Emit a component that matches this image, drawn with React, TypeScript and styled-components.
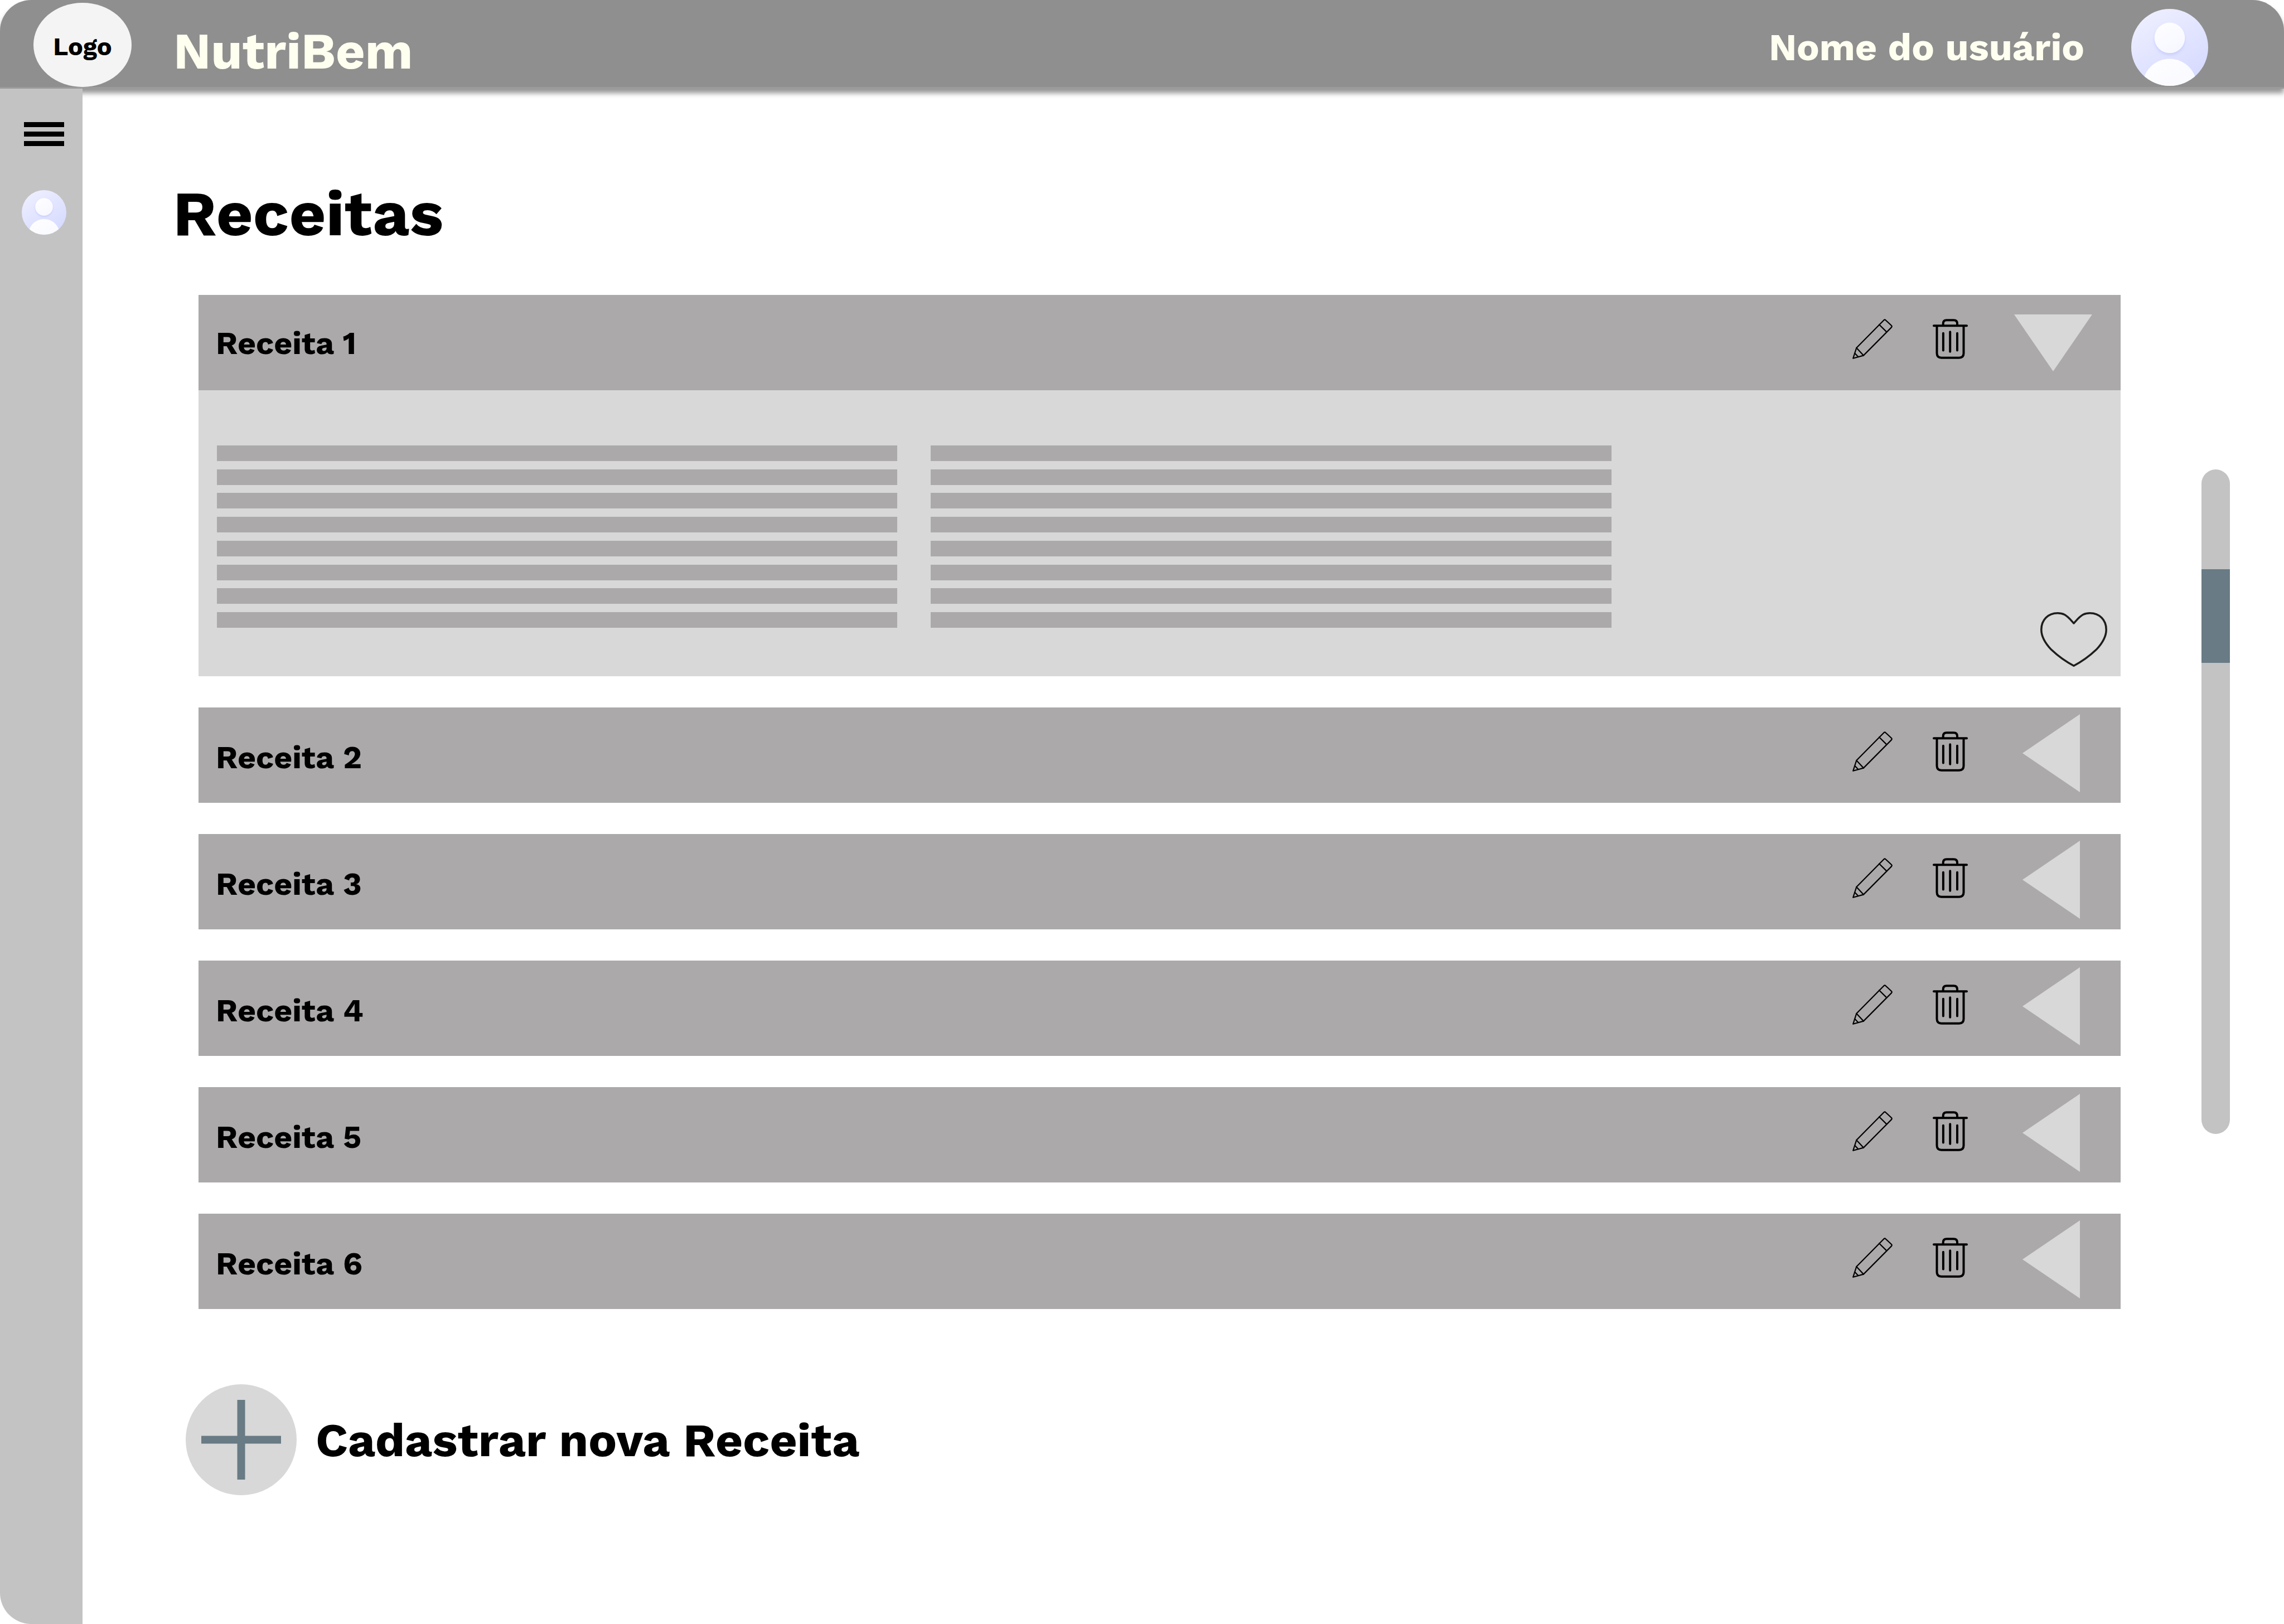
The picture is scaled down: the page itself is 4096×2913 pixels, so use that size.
import React, { useId, useState } from "react";
import styled, { createGlobalStyle } from "styled-components";

const GlobalStyle = createGlobalStyle`
  *, *::before, *::after { box-sizing: border-box; }
  body {
    margin: 0;
    background: #ffffff;
    color: #000000;
    font-family: "Work Sans", Inter, "Liberation Sans", sans-serif;
    font-weight: 700;
  }
  button {
    margin: 0;
    padding: 0;
    border: 0;
    background: none;
    color: inherit;
    font: inherit;
    cursor: pointer;
  }
  svg { display: block; }
`;

const Page = styled.div`
  display: flex;
  flex-direction: column;
  min-height: 100vh;
`;

const Header = styled.header`
  position: relative;
  display: flex;
  align-items: center;
  height: 159px;
  padding: 0 136px 0 60px;
  border-bottom: 3px solid #9b9b9b;
  border-radius: 56px 56px 0 0;
  background: #8f8f8f;
  color: #fffff0;
  box-shadow: 0 8px 10px rgba(0, 0, 0, 0.42);
`;

const Logo = styled.a`
  display: flex;
  align-items: center;
  justify-content: center;
  align-self: flex-end;
  width: 176px;
  height: 151px;
  padding-top: 6px;
  border-radius: 50%;
  background: #f4f4f4;
  color: #000000;
  font-size: 45px;
  line-height: 56px;
  text-decoration: none;
`;

const Brand = styled.span`
  margin-left: 75px;
  padding-top: 28px;
  font-size: 91px;
  line-height: 104px;
`;

const User = styled.div`
  display: flex;
  align-items: center;
  gap: 84px;
  margin-left: auto;
  padding-top: 14px;
  font-size: 68px;
  line-height: 80px;
`;

const Body = styled.div`
  display: flex;
  flex: 1;
`;

const Sidebar = styled.nav`
  position: relative;
  display: flex;
  flex-direction: column;
  align-items: center;
  gap: 79px;
  width: 148px;
  padding: 60px 0 0 9px;
  border-bottom-left-radius: 56px;
  background: #c3c3c3;
`;

const MenuButton = styled.button`
  display: flex;
  flex-direction: column;
  gap: 8px;
  width: 72px;
`;

const MenuBar = styled.span`
  height: 9px;
  background: #000000;
`;

const Main = styled.main`
  flex: 1;
  padding: 159px 145px 0 162px;
`;

const Title = styled.h1`
  margin: 0;
  font-size: 114px;
  line-height: 130px;
`;

const RecipeList = styled.ul`
  display: flex;
  flex-direction: column;
  gap: 56px;
  margin: 81px 0 0 46px;
  padding: 0;
  list-style: none;
`;

const RecipeRow = styled.div`
  display: flex;
  align-items: center;
  height: 171px;
  padding: 0 51px 0 31px;
  background: #aba9aa;
`;

const RecipeName = styled.h2<{ $open: boolean }>`
  flex: 1;
  margin: 0;
  padding-top: ${(p) => (p.$open ? 2 : 8)}px;
  font-size: 57px;
  line-height: 72px;
`;

const Tools = styled.div`
  display: flex;
  gap: 72px;
  margin-right: 83px;
  padding-bottom: 14px;
`;

const Panel = styled.div`
  display: grid;
  grid-template-columns: 1220fr 1220fr 829fr;
  gap: 60px;
  padding: 99px 24px 17px 33px;
  background: #d8d8d8;
`;

const Lines = styled.div`
  display: flex;
  flex-direction: column;
  justify-content: space-between;
  height: 327px;
  margin-bottom: 70px;
`;

const Line = styled.span`
  height: 28px;
  background: #aba9aa;
`;

const LikeButton = styled.button`
  align-self: end;
  justify-self: end;
`;

const AddButton = styled.button`
  display: flex;
  align-items: center;
  gap: 34px;
  margin: 135px 0 0 23px;
  font-size: 85px;
  line-height: 100px;
`;

const AddDisc = styled.span`
  display: flex;
  align-items: center;
  justify-content: center;
  width: 199px;
  height: 199px;
  border-radius: 50%;
  background: #d8d8d8;
`;

const ScrollTrack = styled.div`
  width: 51px;
  height: 1192px;
  margin: 683px 97px 0 0;
  padding-top: 179px;
  border-radius: 26px;
  background: #c3c3c3;
`;

const ScrollThumb = styled.div`
  height: 168px;
  background: #697b84;
`;

function Avatar({ size }: { size: number }) {
  const id = useId();
  return (
    <svg width={size} height={size} viewBox="0 0 202 202" role="img" aria-label="Avatar">
      <defs>
        <linearGradient id={`${id}bg`} x1="0.2" y1="0" x2="0.8" y2="1">
          <stop offset="0" stopColor="#eeefff" />
          <stop offset="1" stopColor="#d5d9ff" />
        </linearGradient>
        <linearGradient id={`${id}fg`} x1="0.2" y1="0" x2="0.8" y2="1">
          <stop offset="0" stopColor="#fefeff" />
          <stop offset="1" stopColor="#f6f7ff" />
        </linearGradient>
        <clipPath id={`${id}clip`}>
          <circle cx="101" cy="101" r="101" />
        </clipPath>
        <filter id={`${id}shade`} x="-30%" y="-30%" width="160%" height="160%">
          <feDropShadow dx="0" dy="5" stdDeviation="4" floodColor="#bfc5fb" floodOpacity="0.7" />
        </filter>
      </defs>
      <g clipPath={`url(#${id}clip)`}>
        <rect width="202" height="202" fill={`url(#${id}bg)`} />
        <circle cx="101" cy="76" r="40" fill={`url(#${id}fg)`} filter={`url(#${id}shade)`} />
        <circle cx="101" cy="202" r="71" fill={`url(#${id}fg)`} />
      </g>
    </svg>
  );
}

function PencilIcon() {
  return (
    <svg width="72" height="72" viewBox="0 0 72 72" fill="none" stroke="#000" strokeWidth="2.2" strokeLinejoin="round" strokeLinecap="round">
      <path d="M1.2 70.8 L7.3 52 L56.4 2.2 Q58 0.6 59.6 2.2 L69.8 11.8 Q71.6 13.6 69.8 15.4 L19.9 65.6 Z" />
      <path d="M48 10.3 L61.3 23.4 M7.3 52 L19.9 65.6 M4.4 61.7 L10.4 68" />
    </svg>
  );
}

function TrashIcon() {
  return (
    <svg width="63" height="72" viewBox="0 0 63 72" fill="none" stroke="#000" strokeWidth="4" strokeLinecap="round">
      <path d="M2 12.3 H61" />
      <path d="M18.7 11 V8.5 Q18.7 2.2 25 2.2 H37.6 Q44 2.2 44 8.5 V11" />
      <path d="M7.5 13 V61.5 Q7.5 69.7 15.7 69.7 H47.3 Q55.5 69.7 55.5 61.5 V13" />
      <path d="M18.9 25.7 V56.6 M31.2 23.2 V58.8 M44 25.7 V56.6" />
    </svg>
  );
}

function ToggleIcon({ open }: { open: boolean }) {
  return (
    <svg width="140" height="148" viewBox="0 0 140 148" fill="#d8d8d8">
      {open ? <polygon points="0,23 140,23 70,125" /> : <polygon points="15,70 118,0 118,140" />}
    </svg>
  );
}

function HeartIcon() {
  return (
    <svg width="120" height="98" viewBox="0 0 120 98" fill="none" stroke="#1d1d1b" strokeWidth="3.5" strokeLinejoin="round">
      <path d="M60 20 C54.5 14 50 8 43.5 4.5 C39.5 2.5 35.5 1.8 31 1.8 C14 1.8 1.8 14 1.8 31.4 C1.8 43 8 55 20 67.6 C31 78 45 88.5 60 96.2 C75 88.5 89 78 100 67.6 C112 55 118.2 43 118.2 31.4 C118.2 14 106 1.8 89 1.8 C84.5 1.8 80.5 2.5 76.5 4.5 C70 8 65.5 14 60 20 Z" />
    </svg>
  );
}

function PlusIcon() {
  return (
    <svg width="143" height="143" viewBox="0 0 143 143" stroke="#697b84" strokeWidth="14">
      <path d="M0 71.5 H143 M71.5 0 V143" />
    </svg>
  );
}

const recipes = [1, 2, 3, 4, 5, 6];
const lineKeys = [0, 1, 2, 3, 4, 5, 6, 7];

function TextLines() {
  return (
    <Lines>
      {lineKeys.map((k) => (
        <Line key={k} />
      ))}
    </Lines>
  );
}

function Recipe({ name, open, onToggle }: { name: string; open: boolean; onToggle: () => void }) {
  return (
    <li>
      <RecipeRow>
        <RecipeName $open={open}>{name}</RecipeName>
        <Tools>
          <button type="button" aria-label={`Editar ${name}`}>
            <PencilIcon />
          </button>
          <button type="button" aria-label={`Excluir ${name}`}>
            <TrashIcon />
          </button>
        </Tools>
        <button type="button" aria-label={`Abrir ${name}`} aria-expanded={open} onClick={onToggle}>
          <ToggleIcon open={open} />
        </button>
      </RecipeRow>
      {open && (
        <Panel>
          <TextLines />
          <TextLines />
          <LikeButton type="button" aria-label={`Favoritar ${name}`}>
            <HeartIcon />
          </LikeButton>
        </Panel>
      )}
    </li>
  );
}

export default function App() {
  const [opened, setOpened] = useState(1);
  return (
    <Page>
      <GlobalStyle />
      <Header>
        <Logo href="#">Logo</Logo>
        <Brand>NutriBem</Brand>
        <User>
          <span>Nome do usuário</span>
          <Avatar size={138} />
        </User>
      </Header>
      <Body>
        <Sidebar>
          <MenuButton type="button" aria-label="Menu">
            <MenuBar />
            <MenuBar />
            <MenuBar />
          </MenuButton>
          <Avatar size={80} />
        </Sidebar>
        <Main>
          <Title>Receitas</Title>
          <RecipeList>
            {recipes.map((n) => (
              <Recipe
                key={n}
                name={`Receita ${n}`}
                open={opened === n}
                onToggle={() => setOpened(opened === n ? 0 : n)}
              />
            ))}
          </RecipeList>
          <AddButton type="button">
            <AddDisc>
              <PlusIcon />
            </AddDisc>
            Cadastrar nova Receita
          </AddButton>
        </Main>
        <ScrollTrack>
          <ScrollThumb />
        </ScrollTrack>
      </Body>
    </Page>
  );
}
